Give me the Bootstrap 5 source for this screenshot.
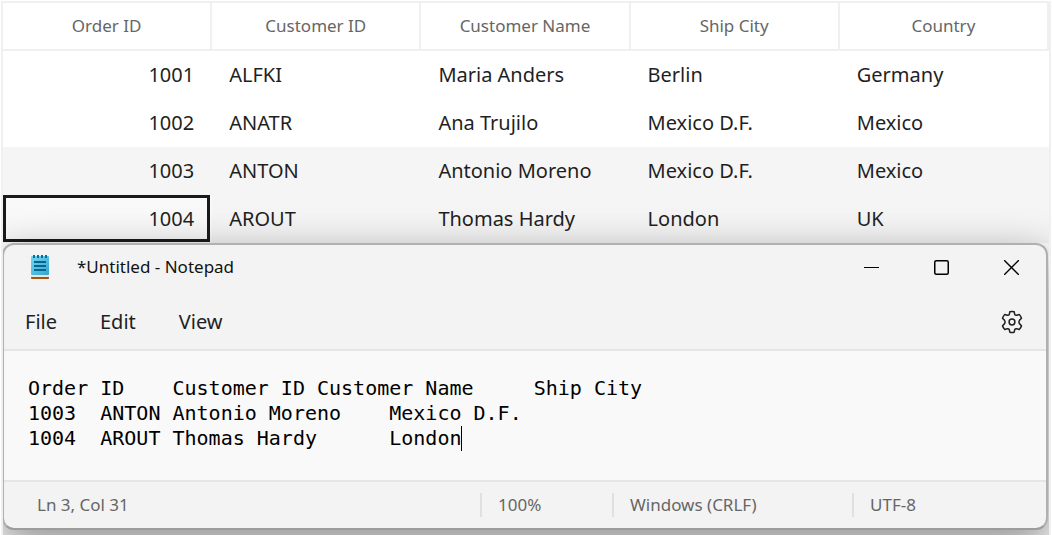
<!DOCTYPE html>
<html lang="en">
<head>
<meta charset="utf-8">
<meta name="viewport" content="width=device-width, initial-scale=1">
<title>Orders and Notepad</title>
<link href="https://cdn.jsdelivr.net/npm/bootstrap@5.3.0/dist/css/bootstrap.min.css" rel="stylesheet">
<style>
  body { font-family: "Noto Sans", "Open Sans", sans-serif; background: #fff; color: #1f1f1f; }
  .desk { border: 2px solid #f0f0f0; border-bottom: 0; margin: 1px 1px 0; overflow: hidden; }
  .orders { table-layout: fixed; width: 100%; border-collapse: separate; border-spacing: 0; }
  .orders th { height: 48px; padding: 0; font-size: 17px; font-weight: 400; line-height: 24px; color: #666; text-align: center; border-right: 2px solid #f0f0f0; border-bottom: 2px solid #f0f0f0; }
  .orders td { height: 48px; padding: 0 17px; font-size: 20px; line-height: 24px; }
  .orders .picked td { background: #f5f5f5; }
  .orders td.num { padding-right: 18px; }
  .orders td.focused { position: relative; background: #f9f9f9; }
  .orders td.focused::after { content: ""; position: absolute; inset: 0 2px 1px 0; border: 3px solid #1a1a1a; }

  .pad { margin: 0 1px 6px -1px; border: 2px solid #b0b0b0; border-bottom-color: #9c9c9c; border-radius: 12px; background: #f3f3f3; box-shadow: 0 16px 44px 4px rgba(0,0,0,.4); }
  .pad-title { height: 44px; padding-left: 27px; font-size: 17px; color: #111; }
  .win-btn { width: 70px; height: 42px; padding: 0; border-radius: 0; display: flex; align-items: center; justify-content: center; }
  .pad-menu { height: 62px; gap: 43px; padding: 6px 22px 0 21px; font-size: 20px; border-bottom: 2px solid #e5e5e5; }
  .pad-menu .btn { padding: 0; border: 0; font-size: 20px; line-height: 24px; color: #1f1f1f; }
  .pad-body { background: #f9f9f9; padding: 25px 24px 29px; border-bottom: 2px solid #e5e5e5; }
  .sheet, .sheet textarea { font-family: "DejaVu Sans Mono", monospace; font-size: 20px; line-height: 25px; }
  .sheet textarea { display: block; width: 100%; padding: 0; border: 0; outline: 0; resize: none; overflow: hidden; background: transparent; color: #000; tab-size: 6; white-space: pre; }
  .caret { position: absolute; left: 36ch; bottom: 0; width: 1px; height: 25px; background: #000; }
  .pad-status { height: 46px; padding-left: 33px; font-size: 17px; color: #666; }
  .stat { border-left: 2px solid #e0e0e0; padding-left: 16px; line-height: 24px; }
  .stat-zoom { width: 132px; } .stat-eol { width: 240px; } .stat-enc { width: 194px; }
</style>
</head>
<body>
<main class="desk">
  <table class="orders">
    <thead>
      <tr><th scope="col">Order ID</th><th scope="col">Customer ID</th><th scope="col">Customer Name</th><th scope="col">Ship City</th><th scope="col">Country</th></tr>
    </thead>
    <tbody>
      <tr><td class="num text-end">1001</td><td>ALFKI</td><td>Maria Anders</td><td>Berlin</td><td>Germany</td></tr>
      <tr><td class="num text-end">1002</td><td>ANATR</td><td>Ana Trujilo</td><td>Mexico D.F.</td><td>Mexico</td></tr>
      <tr class="picked"><td class="num text-end">1003</td><td>ANTON</td><td>Antonio Moreno</td><td>Mexico D.F.</td><td>Mexico</td></tr>
      <tr class="picked"><td class="num text-end focused">1004</td><td>AROUT</td><td>Thomas Hardy</td><td>London</td><td>UK</td></tr>
    </tbody>
  </table>

  <section class="pad position-relative" aria-label="Notepad">
    <header class="pad-title d-flex align-items-center">
      <svg width="18" height="24" viewBox="0 0 18 24" aria-hidden="true">
        <defs><linearGradient id="page" x1="0" y1="0" x2="1" y2="1"><stop offset="0" stop-color="#73d6f4"/><stop offset="1" stop-color="#35a5cc"/></linearGradient></defs>
        <rect y="21" width="18" height="3" rx="1" fill="#a9520d"/>
        <rect y="19" width="18" height="3" fill="#e6e6e6"/>
        <rect y="1" width="18" height="19" rx="1" fill="url(#page)"/>
        <path d="M3 0v3M7 0v3M11 0v3M15 0v3" stroke="#0a6e96" stroke-width="2"/>
        <path d="M3 7h12M3 11h12M3 15h12" stroke="#07658e" stroke-width="2"/>
      </svg>
      <span class="ms-4 ps-1">*Untitled - Notepad</span>
      <div class="d-flex ms-auto">
        <button type="button" class="btn win-btn" aria-label="Minimize"><svg width="15" height="15" viewBox="0 0 15 15"><path d="M0 7.5h15" stroke="#000"/></svg></button>
        <button type="button" class="btn win-btn" aria-label="Maximize"><svg width="15" height="15" viewBox="0 0 15 15"><rect x=".75" y=".75" width="13.5" height="13.5" rx="1.5" fill="none" stroke="#000" stroke-width="1.5"/></svg></button>
        <button type="button" class="btn win-btn" aria-label="Close"><svg width="15" height="15" viewBox="0 0 15 15"><path d="M0 0l15 15M15 0L0 15" stroke="#000" stroke-width="1.4"/></svg></button>
      </div>
    </header>
    <nav class="pad-menu d-flex align-items-center" aria-label="Menu">
      <button type="button" class="btn">File</button>
      <button type="button" class="btn">Edit</button>
      <button type="button" class="btn">View</button>
      <button type="button" class="btn ms-auto d-flex" aria-label="Settings">
        <svg width="24" height="24" viewBox="0 0 24 24" fill="none" stroke="#1f1f1f" stroke-width="1.5" stroke-linejoin="round">
          <path d="M9.8 1.8Q12 1.2 14.2 1.8L14.7 4.4Q15.3 5.6 16.7 5.3L19.2 4.5Q20.9 6.1 21.5 8.3L19.6 10.1Q18.3 12 19.6 13.9L21.5 15.7Q20.9 17.9 19.2 19.5L16.7 18.7Q15.3 18.4 14.7 19.6L14.2 22.2Q12 22.8 9.8 22.2L9.3 19.6Q8.7 18.4 7.3 18.7L4.8 19.5Q3.1 17.9 2.5 15.7L4.4 13.9Q5.7 12 4.4 10.1L2.5 8.3Q3.1 6.1 4.8 4.5L7.3 5.3Q8.7 5.6 9.3 4.4Z"/>
          <circle cx="12" cy="12" r="2.9"/>
        </svg>
      </button>
    </nav>
    <div class="pad-body">
      <div class="sheet position-relative">
        <textarea rows="3" spellcheck="false" aria-label="Text editor">Order ID&#9;Customer ID&#9;Customer Name&#9;Ship City
1003&#9;ANTON&#9;Antonio Moreno&#9;Mexico D.F.
1004&#9;AROUT&#9;Thomas Hardy&#9;London</textarea>
        <span class="caret"></span>
      </div>
    </div>
    <footer class="pad-status d-flex align-items-center">
      <span class="me-auto">Ln 3, Col 31</span>
      <span class="stat stat-zoom">100%</span>
      <span class="stat stat-eol">Windows (CRLF)</span>
      <span class="stat stat-enc">UTF-8</span>
    </footer>
  </section>
</main>
<script src="https://cdn.jsdelivr.net/npm/bootstrap@5.3.0/dist/js/bootstrap.bundle.min.js"></script>
</body>
</html>
